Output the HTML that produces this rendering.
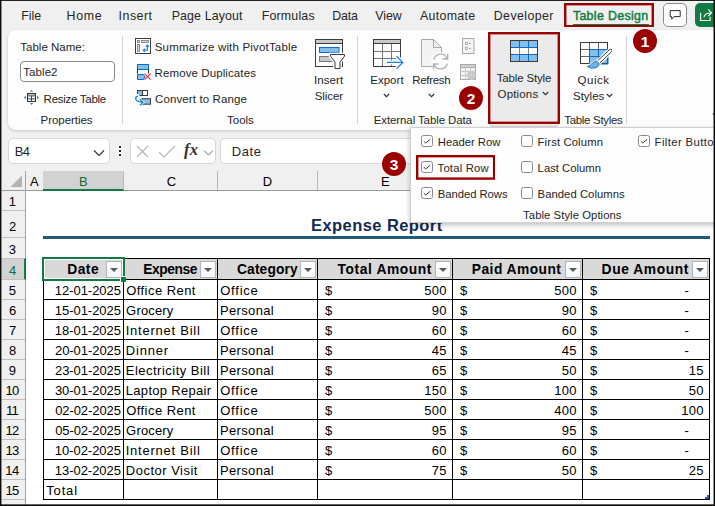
<!DOCTYPE html><html><head><meta charset="utf-8"><title>Expense Report</title><style>
*{box-sizing:border-box;margin:0;padding:0}
html,body{width:715px;height:506px;overflow:hidden;background:#f0f0f0}
body{position:relative;font-family:"Liberation Sans",sans-serif;font-size:11.5px;color:#262626}
.a{position:absolute;white-space:nowrap}
.t{position:absolute;white-space:nowrap;line-height:16px;height:16px}
.b{font-weight:bold}
.hl{position:absolute;background:#000;height:1px}
.vl{position:absolute;background:#000;width:1px}
.cb{position:absolute;width:12px;height:12px;border:1px solid #8a8a8a;border-radius:2.5px;background:#fff}
.dd{position:absolute;width:16px;height:17px;border:1px solid #b4b4b4;background:linear-gradient(#fff,#f4f6fa)}
.dd:after{content:"";position:absolute;left:3.2px;top:5.8px;border-left:4px solid transparent;border-right:4px solid transparent;border-top:4.8px solid #5a5a5a}
.circ{position:absolute;width:24px;height:24px;border-radius:12px;background:#9b0000;color:#fff;font-weight:bold;font-size:15.5px;line-height:26px;text-align:center}
.red{position:absolute;border:2px solid #9b0000}
</style></head><body>
<div class="t" style="left:21.33px;top:8px;font-size:12.4px;letter-spacing:-0.09px">File</div>
<div class="t" style="left:66.53px;top:8px;font-size:12.4px;letter-spacing:0.68px">Home</div>
<div class="t" style="left:118.6px;top:8px;font-size:12.4px;letter-spacing:0.48px">Insert</div>
<div class="t" style="left:171.73px;top:8px;font-size:12.4px;letter-spacing:0.11px">Page Layout</div>
<div class="t" style="left:261.73px;top:8px;font-size:12.4px;letter-spacing:0.18px">Formulas</div>
<div class="t" style="left:332.13px;top:8px;font-size:12.4px;letter-spacing:-0.12px">Data</div>
<div class="t" style="left:375.31px;top:8px;font-size:12.4px;letter-spacing:-0.05px">View</div>
<div class="t" style="left:419.9px;top:8px;font-size:12.4px;letter-spacing:0.32px">Automate</div>
<div class="t" style="left:493.73px;top:8px;font-size:12.4px;letter-spacing:0.41px">Developer</div>
<div class="t" style="left:572.88px;top:8px;font-size:12.4px;letter-spacing:0.33px;color:#107c41;-webkit-text-stroke:.45px #107c41">Table Design</div>
<div class="a" style="left:572.500px;top:24px;width:76px;height:2px;background:#107c41"></div>
<svg class="a" style="left:564px;top:3px" width="90" height="24.4" viewBox="0 0 90 24.4"><rect x="1.2" y="1.2" width="87.6" height="22" fill="none" stroke="#9b0000" stroke-width="2.4"/></svg>
<div class="a" style="left:663px;top:3px;width:24px;height:24px;border:1px solid #8a8a8a;border-radius:5px;background:#fff"></div>
<svg class="a" style="left:668px;top:8px" width="14" height="14" viewBox="0 0 14 14"><path d="M2.200 2.600h10v6h-6.200l-2.300 2.600v-2.600h-1.500z" fill="none" stroke="#2b2b2b" stroke-width="1"/></svg>
<div class="a" style="left:695px;top:3px;width:20px;height:24px;border-radius:5px 0 0 5px;background:#107c41"></div>
<svg class="a" style="left:699px;top:8px" width="14" height="14" viewBox="0 0 14 14"><path d="M1.600 4.800v7.700h9.500v-3.700M5 9.300c.3-3 2.800-4.300 6.800-4.300M9.300 1.400l3.200 3.600-3.200 3.200" fill="none" stroke="#fff" stroke-width="1.100"/></svg>
<div class="a" style="left:8px;top:30px;width:707px;height:100px;background:#fdfdfd;border-radius:8px 0 0 8px;box-shadow:0 1px 3px rgba(0,0,0,.18)"></div>
<div class="a" style="left:122px;top:36px;width:1px;height:88px;background:#d4d4d4"></div>
<div class="a" style="left:357px;top:36px;width:1px;height:88px;background:#d4d4d4"></div>
<div class="a" style="left:626px;top:36px;width:1px;height:88px;background:#d4d4d4"></div>
<div class="t" style="left:20.28px;top:39px;letter-spacing:0.01px">Table Name:</div>
<div class="a" style="left:20px;top:61px;width:95px;height:21px;border:1px solid #8a8a8a;border-radius:4px;background:#fff"></div>
<div class="t" style="left:23.28px;top:64px;letter-spacing:0.07px">Table2</div>
<div class="t" style="left:43.6px;top:91px;letter-spacing:-0.27px">Resize Table</div>
<div class="t" style="left:40.6px;top:112px;letter-spacing:-0.05px">Properties</div>
<svg class="a" style="left:23px;top:89px" width="17" height="17" viewBox="0 0 17 17"><rect x="4.500" y="4.500" width="8" height="8" fill="#fff" stroke="#333"/><rect x="5" y="5" width="7" height="1.500" fill="#c4c4c4"/><path d="M4.500 6.900h8M4.500 9.900h8M8.500 6.900v5.600" stroke="#444" fill="none"/><path d="M8.500 0.900l1.700 1.900h-3.400zM8.500 15.900l1.700-1.900h-3.400zM0.800 8.400l2.100-1.700v3.400zM16.100 8.400l-2.100-1.700v3.400z" fill="#1e88d8"/></svg>
<div class="t" style="left:154.75px;top:39px;letter-spacing:0.18px">Summarize with PivotTable</div>
<div class="t" style="left:154.6px;top:65px;letter-spacing:0.1px">Remove Duplicates</div>
<div class="t" style="left:155.09px;top:91px;letter-spacing:0.11px">Convert to Range</div>
<div class="t" style="left:227.08px;top:112px;letter-spacing:-0.04px">Tools</div>
<svg class="a" style="left:135px;top:38px" width="16" height="16" viewBox="0 0 16 16"><rect x="0.500" y="0.500" width="15" height="15" fill="#fff" stroke="#3b3b3b"/><rect x="2.400" y="2.400" width="2.200" height="2.200" fill="#d8d8d8" stroke="#666" stroke-width=".7"/><rect x="6.400" y="2.400" width="7.200" height="2.200" fill="#d8d8d8" stroke="#666" stroke-width=".7"/><rect x="2.400" y="6.400" width="2.200" height="7.200" fill="#d8d8d8" stroke="#666" stroke-width=".7"/><path d="M8.400 12.200h4v-5M10 10.600l-1.800 1.600 1.800 1.600M10.900 8.800l1.500-1.800 1.500 1.800" fill="none" stroke="#1e88d8" stroke-width="1.200"/></svg>
<svg class="a" style="left:136px;top:63px" width="17" height="18" viewBox="0 0 17 18"><rect x="1.500" y="1.500" width="11" height="5" fill="#83beec" stroke="#0f6cbd"/><path d="M1.500 7v3.500M12.500 7v3.500" stroke="#222" fill="none"/><path d="M1.500 11.500h6l1.500 2.500-1.500 2.500h-6z" fill="#83beec" stroke="#0f6cbd"/><path d="M8.600 10.600l6 6M14.600 10.600l-6 6" stroke="#e8424a" stroke-width="1.300" fill="none"/></svg>
<svg class="a" style="left:134px;top:89px" width="18" height="18" viewBox="0 0 18 18"><rect x="3.500" y="1.500" width="10" height="5" fill="#fff" stroke="#3b3b3b"/><rect x="4" y="2" width="4.500" height="4" fill="#83beec"/><path d="M8.500 1.500v5" stroke="#3b3b3b"/><rect x="8" y="9.700" width="8.500" height="5.500" fill="#83beec" stroke="#3b3b3b"/><path d="M6.500 9.500l4.500 3.700-4.500 3.700z" fill="#fdfdfd"/><path d="M2.500 5.500l2.500 2" stroke="#fdfdfd" stroke-width="2.500"/><path d="M3.800 6.800C0.500 8.500 0.500 12.800 8.500 13.200M5.800 10.300L9 13.200L5.800 16.400" fill="none" stroke="#1e88d8" stroke-width="1.300"/></svg>
<div class="t" style="left:314.12px;top:72px;letter-spacing:0.04px">Insert</div>
<div class="t" style="left:314.75px;top:88px;letter-spacing:-0.09px">Slicer</div>
<svg class="a" style="left:314px;top:38px" width="32" height="32" viewBox="0 0 32 32"><rect x="1.500" y="1.500" width="27" height="27" fill="#fdfdfd" stroke="#3b3b3b"/><rect x="1.500" y="1.500" width="27" height="4" fill="#c8c8c8" stroke="#3b3b3b"/><rect x="5.500" y="9.500" width="19.500" height="5" fill="#83beec" stroke="#0f6cbd"/><rect x="5.500" y="18.500" width="13" height="5" fill="#c8c8c8" stroke="#777"/><path d="M16.500 16.500h14v1.700l-4.500 5.800v6.500h-5v-6.500l-4.500-5.800z" fill="#fdfdfd" stroke="#fdfdfd" stroke-width="3.500"/><path d="M16.500 16.500h14v1.700l-4.500 5.800v6.500h-5v-6.500l-4.500-5.800z" fill="#fdfdfd" stroke="#3b3b3b"/></svg>
<div class="t" style="left:370.2px;top:72px;letter-spacing:0.03px">Export</div>
<svg class="a" style="left:372px;top:38px" width="32" height="32" viewBox="0 0 32 32"><rect x="1.500" y="1.500" width="27" height="27" fill="#fdfdfd" stroke="#3b3b3b"/><path d="M10.500 5.500v23M19.500 5.500v23M1.500 13.500h27M1.500 20.500h27" stroke="#777" fill="none"/><rect x="1.500" y="1.500" width="27" height="4" fill="#c8c8c8" stroke="#3b3b3b"/><rect x="1.500" y="1.500" width="27" height="27" fill="none" stroke="#3b3b3b"/><path d="M15 24.400h15.500M24.500 18.200l6.300 6.200-6.300 6.200" fill="none" stroke="#fdfdfd" stroke-width="4"/><path d="M15 24.400h15.500M24.500 18.200l6.300 6.200-6.300 6.200" fill="none" stroke="#1e88d8" stroke-width="1.300"/></svg>
<svg class="a" style="left:382.7px;top:93.2px" width="7" height="5" viewBox="0 0 7 5"><path d="M0.800 1l2.700 2.700 2.700-2.700" fill="none" stroke="#333" stroke-width="1.150"/></svg>
<div class="t" style="left:412.2px;top:72px;letter-spacing:-0.31px">Refresh</div>
<svg class="a" style="left:419px;top:38px" width="32" height="33" viewBox="0 0 32 33"><path d="M2.500 1.500h12l8 8v19h-20z" fill="#f3f3f3" stroke="#a8a8a8"/><path d="M14.500 1.500v8h8" fill="none" stroke="#a8a8a8"/><circle cx="21.600" cy="23.500" r="9.500" fill="#fdfdfd"/><path d="M14.900 21.500A7 7 0 0 1 28.200 20.500M28.700 16v5h-5M28.300 25.500A7 7 0 0 1 15 26.500M14.500 31v-5h5" fill="none" stroke="#b0b0b0" stroke-width="1.300"/></svg>
<svg class="a" style="left:428.2px;top:93.2px" width="7" height="5" viewBox="0 0 7 5"><path d="M0.800 1l2.700 2.700 2.700-2.700" fill="none" stroke="#333" stroke-width="1.150"/></svg>
<svg class="a" style="left:461px;top:37px" width="14" height="18" viewBox="0 0 14 18"><rect x="1.500" y="1.500" width="11.500" height="15" fill="#f3f3f3" stroke="#a8a8a8"/><rect x="4.500" y="5.500" width="2" height="2" fill="none" stroke="#a8a8a8" stroke-width=".8"/><rect x="4.500" y="10.500" width="2" height="2" fill="none" stroke="#a8a8a8" stroke-width=".8"/><path d="M8 6.500h2M8 11.500h2" stroke="#a8a8a8" fill="none"/></svg>
<svg class="a" style="left:459px;top:63px" width="19" height="18" viewBox="0 0 19 18"><rect x="1.500" y="1.500" width="15" height="15" fill="#f6f6f6" stroke="#a8a8a8"/><rect x="1.500" y="1.500" width="15" height="3" fill="#d0d0d0" stroke="#a8a8a8"/><path d="M1.500 8.500h15M1.500 12.500h8M6.500 4.500v12M11.500 4.500v4" stroke="#c4c4c4" fill="none"/><circle cx="12.600" cy="12.100" r="4.700" fill="#c2c2c2"/><path d="M8.200 12.100h8.800M12.600 7.700v8.800" stroke="#dcdcdc" stroke-width=".5" fill="none"/><ellipse cx="12.600" cy="12.100" rx="2.200" ry="4.300" fill="none" stroke="#dcdcdc" stroke-width=".5"/></svg>
<div class="t" style="left:373.8px;top:112px;letter-spacing:-0.11px">External Table Data</div>
<div class="a" style="left:489px;top:33px;width:70px;height:94px;background:#ebebeb;border-radius:0 0 4px 4px;border-bottom:1px solid #d8d8d8"></div>
<svg class="a" style="left:488px;top:32px" width="72" height="92" viewBox="0 0 72 92"><rect x="1.2" y="1.2" width="69.6" height="89.6" fill="none" stroke="#9b0000" stroke-width="2.4"/></svg>
<svg class="a" style="left:510px;top:40px" width="28" height="22" viewBox="0 0 28 22"><rect x="0.500" y="0.500" width="27" height="21" fill="#83beec" stroke="#3b3b3b"/><rect x="1" y="8" width="26" height="6" fill="#fafafa"/><path d="M9.500 1v20M18.500 1v20M1 7.500h26M1 14.500h26" stroke="#0f6cbd" fill="none"/><path d="M9.500 8v6M18.500 8v6" stroke="#808080" fill="none"/><rect x="0.500" y="0.500" width="27" height="21" fill="none" stroke="#3b3b3b"/></svg>
<div class="t" style="left:496.68px;top:70px;letter-spacing:-0.16px">Table Style</div>
<div class="t" style="left:497.53px;top:86px;letter-spacing:0.17px">Options</div>
<svg class="a" style="left:542.3px;top:91.3px" width="7" height="5" viewBox="0 0 7 5"><path d="M0.800 1l2.700 2.700 2.700-2.700" fill="none" stroke="#333" stroke-width="1.150"/></svg>
<svg class="a" style="left:579px;top:41px" width="33" height="30" viewBox="0 0 33 30"><rect x="1.500" y="1.500" width="27" height="21" fill="#fdfdfd" stroke="#3b3b3b"/><path d="M10.500 1.500v21M19.500 1.500v21M1.500 8.500h27M1.500 15.500h27" stroke="#666" fill="none"/><rect x="10.500" y="8.500" width="18" height="14" fill="#83beec" stroke="#0f6cbd"/><path d="M19.500 8.500v14M10.500 15.500h18" stroke="#0f6cbd" fill="none"/><rect x="1.500" y="1.500" width="27" height="21" fill="none" stroke="#3b3b3b"/><path d="M10.500 8.500h18.500v14.500h-18.500z" fill="none" stroke="#0f6cbd"/><path d="M31 8.300l-13.500 12.500 2.200 2.400 13-12.600c1-1.500-.5-3-1.700-2.300z" fill="#fdfdfd" stroke="#fdfdfd" stroke-width="3"/><path d="M31 8.300l-13.500 12.500 2.200 2.400 13-12.600c1-1.500-.5-3-1.700-2.300z" fill="#fdfdfd" stroke="#444"/><path d="M18 20.300c-4.500-1-4.500 4-9.600 5.200 4 2.800 11.500 2 11.800-2.700z" fill="#5ea6e8" stroke="#fdfdfd" stroke-width="2.500"/><path d="M18 20.300c-4.500-1-4.500 4-9.600 5.200 4 2.800 11.500 2 11.800-2.700z" fill="#6cb0ea" stroke="#0f6cbd" stroke-width=".9"/></svg>
<div class="t" style="left:577.53px;top:72px;letter-spacing:0.53px">Quick</div>
<div class="t" style="left:572.95px;top:88px;letter-spacing:0.02px">Styles</div>
<svg class="a" style="left:606.4px;top:93.2px" width="7" height="5" viewBox="0 0 7 5"><path d="M0.800 1l2.700 2.700 2.700-2.700" fill="none" stroke="#333" stroke-width="1.150"/></svg>
<div class="t" style="left:564.28px;top:112px;letter-spacing:-0.32px">Table Styles</div>
<svg class="a" style="left:711.500px;top:112px" width="10" height="8" viewBox="0 0 10 8"><path d="M1 1.500l4 4 4-4" fill="none" stroke="#333" stroke-width="1.200"/></svg>
<div class="circ" style="left:633px;top:29px">1</div>
<div class="circ" style="left:459px;top:86px">2</div>
<div class="a" style="left:8px;top:138px;width:102px;height:26px;background:#fff;border:1px solid #d6d6d6;border-radius:5px"></div>
<div class="t" style="left:14.72px;top:143.5px;font-size:13px;letter-spacing:-0.61px">B4</div>
<svg class="a" style="left:93px;top:148.500px" width="12" height="8" viewBox="0 0 12 8"><path d="M1 1.500l5 5 5-5" fill="none" stroke="#333" stroke-width="1.200"/></svg>
<div class="a" style="left:119px;top:146px;width:2px;height:2px;background:#222;box-shadow:0 0 0 1px rgba(255,255,255,.75)"></div>
<div class="a" style="left:119px;top:150px;width:2px;height:2px;background:#222;box-shadow:0 0 0 1px rgba(255,255,255,.75)"></div>
<div class="a" style="left:119px;top:154px;width:2px;height:2px;background:#222;box-shadow:0 0 0 1px rgba(255,255,255,.75)"></div>
<div class="a" style="left:130px;top:138px;width:86px;height:26px;background:#fff;border:1px solid #d6d6d6;border-radius:5px"></div>
<svg class="a" style="left:136px;top:145px" width="13" height="13" viewBox="0 0 13 13"><path d="M1 1l11 11M12 1l-11 11" stroke="#b8b8b8" stroke-width="1.200" fill="none"/></svg>
<svg class="a" style="left:158px;top:145px" width="18" height="13" viewBox="0 0 18 13"><path d="M1 7l5 5 11-11" stroke="#b8b8b8" stroke-width="1.200" fill="none"/></svg>
<div class="a" style="left:184px;top:140px;font-family:'Liberation Serif',serif;font-style:italic;font-weight:bold;font-size:16.500px;line-height:20px;color:#333;letter-spacing:.3px">fx</div>
<svg class="a" style="left:203px;top:148.500px" width="11" height="8" viewBox="0 0 11 8"><path d="M1 1.500l4.500 4.500 4.500-4.500" fill="none" stroke="#6a6a6a" stroke-width="1"/></svg>
<div class="a" style="left:220px;top:138px;width:496px;height:26px;background:#fff;border:1px solid #d6d6d6;border-radius:5px 0 0 5px"></div>
<div class="t" style="left:231.72px;top:143.5px;font-size:13px;letter-spacing:0.58px">Date</div>
<div class="a" style="left:26px;top:191px;width:689px;height:315px;background:#fff"></div>
<div class="a" style="left:1px;top:171px;width:714px;height:19px;background:#f0f0f0"></div>
<div class="a" style="left:1px;top:190px;width:714px;height:1px;background:#9c9c9c"></div>
<div class="a" style="left:43px;top:171px;width:81px;height:20px;background:#d2d2d2;border-bottom:2px solid #107c41"></div>
<div class="a" style="left:123px;top:171px;width:1px;height:19px;background:#b8b8b8"></div>
<div class="a" style="left:217px;top:171px;width:1px;height:19px;background:#b8b8b8"></div>
<div class="a" style="left:317px;top:171px;width:1px;height:19px;background:#b8b8b8"></div>
<div class="a" style="left:452px;top:171px;width:1px;height:19px;background:#b8b8b8"></div>
<div class="a" style="left:582px;top:171px;width:1px;height:19px;background:#b8b8b8"></div>
<div class="t" style="left:30.11px;top:173.5px;font-size:13px;color:#000">A</div>
<div class="t" style="left:166.7px;top:173.5px;font-size:13px;color:#000">C</div>
<div class="t" style="left:262.86px;top:173.5px;font-size:13px;color:#000">D</div>
<div class="t" style="left:380.89px;top:173.5px;font-size:13px;color:#000">E</div>
<div class="t" style="left:78.96px;top:173.5px;font-size:13px;color:#0e6b38">B</div>
<svg class="a" style="left:10px;top:175px" width="13" height="13" viewBox="0 0 13 13"><path d="M12 0.500v11.500h-11.500z" fill="#b4b4b4"/></svg>
<div class="a" style="left:1px;top:191px;width:24px;height:315px;background:#f0f0f0"></div>
<div class="a" style="left:1px;top:258px;width:25px;height:22px;background:#d2d2d2"></div>
<div class="a" style="left:25px;top:171px;width:1px;height:335px;background:#a4a4a4"></div>
<div class="a" style="left:24px;top:258px;width:2px;height:22px;background:#107c41"></div>
<div class="t" style="left:8.73px;top:193.5px;font-size:13px;color:#000">1</div>
<div class="a" style="left:1px;top:210px;width:24px;height:1px;background:#c0c0c0"></div>
<div class="t" style="left:8.88px;top:218.5px;font-size:13px;color:#000">2</div>
<div class="a" style="left:1px;top:237px;width:24px;height:1px;background:#c0c0c0"></div>
<div class="t" style="left:8.83px;top:241.5px;font-size:13px;color:#000">3</div>
<div class="a" style="left:1px;top:258px;width:24px;height:1px;background:#c0c0c0"></div>
<div class="t" style="left:8.96px;top:262.5px;font-size:13px;color:#0e6b38">4</div>
<div class="a" style="left:1px;top:279px;width:24px;height:1px;background:#c0c0c0"></div>
<div class="t" style="left:8.81px;top:282.5px;font-size:13px;color:#000">5</div>
<div class="a" style="left:1px;top:299px;width:24px;height:1px;background:#c0c0c0"></div>
<div class="t" style="left:8.89px;top:302.5px;font-size:13px;color:#000">6</div>
<div class="a" style="left:1px;top:319px;width:24px;height:1px;background:#c0c0c0"></div>
<div class="t" style="left:8.88px;top:322.5px;font-size:13px;color:#000">7</div>
<div class="a" style="left:1px;top:339px;width:24px;height:1px;background:#c0c0c0"></div>
<div class="t" style="left:8.89px;top:342.5px;font-size:13px;color:#000">8</div>
<div class="a" style="left:1px;top:359px;width:24px;height:1px;background:#c0c0c0"></div>
<div class="t" style="left:8.86px;top:362.5px;font-size:13px;color:#000">9</div>
<div class="a" style="left:1px;top:379px;width:24px;height:1px;background:#c0c0c0"></div>
<div class="t" style="left:5.38px;top:382.5px;font-size:13px;letter-spacing:-0.6px;color:#000">10</div>
<div class="a" style="left:1px;top:399px;width:24px;height:1px;background:#c0c0c0"></div>
<div class="t" style="left:5.91px;top:402.5px;font-size:13px;letter-spacing:-0.6px;color:#000">11</div>
<div class="a" style="left:1px;top:419px;width:24px;height:1px;background:#c0c0c0"></div>
<div class="t" style="left:5.41px;top:422.5px;font-size:13px;letter-spacing:-0.6px;color:#000">12</div>
<div class="a" style="left:1px;top:439px;width:24px;height:1px;background:#c0c0c0"></div>
<div class="t" style="left:5.41px;top:442.5px;font-size:13px;letter-spacing:-0.6px;color:#000">13</div>
<div class="a" style="left:1px;top:459px;width:24px;height:1px;background:#c0c0c0"></div>
<div class="t" style="left:5.31px;top:462.5px;font-size:13px;letter-spacing:-0.6px;color:#000">14</div>
<div class="a" style="left:1px;top:479px;width:24px;height:1px;background:#c0c0c0"></div>
<div class="t" style="left:5.41px;top:482.5px;font-size:13px;letter-spacing:-0.6px;color:#000">15</div>
<div class="a" style="left:1px;top:499px;width:24px;height:1px;background:#c0c0c0"></div>
<div class="t b" style="left:311px;top:217px;font-size:16.5px;letter-spacing:0.43px;color:#152a52">Expense Report</div>
<div class="a" style="left:43px;top:236px;width:667px;height:3px;background:#1f5c7c"></div>
<div class="a" style="left:43px;top:258px;width:667px;height:21px;background:#d9d9d9"></div>
<div class="hl" style="left:43px;top:258px;width:667px"></div>
<div class="hl" style="left:43px;top:279px;width:667px"></div>
<div class="hl" style="left:43px;top:299px;width:667px"></div>
<div class="hl" style="left:43px;top:319px;width:667px"></div>
<div class="hl" style="left:43px;top:339px;width:667px"></div>
<div class="hl" style="left:43px;top:359px;width:667px"></div>
<div class="hl" style="left:43px;top:379px;width:667px"></div>
<div class="hl" style="left:43px;top:399px;width:667px"></div>
<div class="hl" style="left:43px;top:419px;width:667px"></div>
<div class="hl" style="left:43px;top:439px;width:667px"></div>
<div class="hl" style="left:43px;top:459px;width:667px"></div>
<div class="hl" style="left:43px;top:479px;width:667px"></div>
<div class="hl" style="left:43px;top:499px;width:667px"></div>
<div class="vl" style="left:43px;top:258px;height:242px"></div>
<div class="vl" style="left:123px;top:258px;height:242px"></div>
<div class="vl" style="left:217px;top:258px;height:242px"></div>
<div class="vl" style="left:317px;top:258px;height:242px"></div>
<div class="vl" style="left:452px;top:258px;height:242px"></div>
<div class="vl" style="left:582px;top:258px;height:242px"></div>
<div class="vl" style="left:709px;top:258px;height:242px"></div>
<div class="t b" style="left:67.2px;top:261.5px;font-size:13.8px;letter-spacing:0.52px;color:#000">Date</div>
<div class="dd" style="left:106px;top:261px"></div>
<div class="t b" style="left:143.2px;top:261.5px;font-size:13.8px;letter-spacing:-0.43px;color:#000">Expense</div>
<div class="dd" style="left:200px;top:261px"></div>
<div class="t b" style="left:237px;top:261.5px;font-size:13.8px;letter-spacing:0.12px;color:#000">Category</div>
<div class="dd" style="left:300px;top:261px"></div>
<div class="t b" style="left:337.6px;top:261.5px;font-size:13.8px;letter-spacing:0.59px;color:#000">Total Amount</div>
<div class="dd" style="left:435px;top:261px"></div>
<div class="t b" style="left:471.8px;top:261.5px;font-size:13.8px;letter-spacing:0.46px;color:#000">Paid Amount</div>
<div class="dd" style="left:565px;top:261px"></div>
<div class="t b" style="left:601.6px;top:261.5px;font-size:13.8px;letter-spacing:0.58px;color:#000">Due Amount</div>
<div class="dd" style="left:692px;top:261px"></div>
<div class="t" style="left:54.75px;top:282.5px;font-size:13px;letter-spacing:-0.03px;color:#000">12-01-2025</div>
<div class="t" style="left:126.16px;top:282.5px;font-size:13px;letter-spacing:0.45px;color:#000">Office Rent</div>
<div class="t" style="left:220.26px;top:282.5px;font-size:13px;letter-spacing:0.76px;color:#000">Office</div>
<div class="t" style="left:325.11px;top:282.5px;font-size:13px;color:#000">$</div>
<div class="t" style="left:424.37px;top:282.5px;font-size:13px;letter-spacing:0.2px;color:#000">500</div>
<div class="t" style="left:460.11px;top:282.5px;font-size:13px;color:#000">$</div>
<div class="t" style="left:554.37px;top:282.5px;font-size:13px;letter-spacing:0.2px;color:#000">500</div>
<div class="t" style="left:590.11px;top:282.5px;font-size:13px;color:#000">$</div>
<div class="t" style="left:684.55px;top:282.5px;font-size:13px;color:#000">-</div>
<div class="t" style="left:54.75px;top:302.5px;font-size:13px;letter-spacing:-0.03px;color:#000">15-01-2025</div>
<div class="t" style="left:126.12px;top:302.5px;font-size:13px;letter-spacing:0.17px;color:#000">Grocery</div>
<div class="t" style="left:219.92px;top:302.5px;font-size:13px;letter-spacing:0.36px;color:#000">Personal</div>
<div class="t" style="left:325.11px;top:302.5px;font-size:13px;color:#000">$</div>
<div class="t" style="left:431.8px;top:302.5px;font-size:13px;letter-spacing:0.2px;color:#000">90</div>
<div class="t" style="left:460.11px;top:302.5px;font-size:13px;color:#000">$</div>
<div class="t" style="left:561.8px;top:302.5px;font-size:13px;letter-spacing:0.2px;color:#000">90</div>
<div class="t" style="left:590.11px;top:302.5px;font-size:13px;color:#000">$</div>
<div class="t" style="left:684.55px;top:302.5px;font-size:13px;color:#000">-</div>
<div class="t" style="left:54.75px;top:322.5px;font-size:13px;letter-spacing:-0.03px;color:#000">18-01-2025</div>
<div class="t" style="left:125.64px;top:322.5px;font-size:13px;letter-spacing:0.77px;color:#000">Internet Bill</div>
<div class="t" style="left:220.26px;top:322.5px;font-size:13px;letter-spacing:0.76px;color:#000">Office</div>
<div class="t" style="left:325.11px;top:322.5px;font-size:13px;color:#000">$</div>
<div class="t" style="left:431.8px;top:322.5px;font-size:13px;letter-spacing:0.2px;color:#000">60</div>
<div class="t" style="left:460.11px;top:322.5px;font-size:13px;color:#000">$</div>
<div class="t" style="left:561.8px;top:322.5px;font-size:13px;letter-spacing:0.2px;color:#000">60</div>
<div class="t" style="left:590.11px;top:322.5px;font-size:13px;color:#000">$</div>
<div class="t" style="left:684.55px;top:322.5px;font-size:13px;color:#000">-</div>
<div class="t" style="left:55.03px;top:342.5px;font-size:13px;letter-spacing:-0.06px;color:#000">20-01-2025</div>
<div class="t" style="left:125.82px;top:342.5px;font-size:13px;letter-spacing:0.77px;color:#000">Dinner</div>
<div class="t" style="left:219.92px;top:342.5px;font-size:13px;letter-spacing:0.36px;color:#000">Personal</div>
<div class="t" style="left:325.11px;top:342.5px;font-size:13px;color:#000">$</div>
<div class="t" style="left:431.86px;top:342.5px;font-size:13px;letter-spacing:0.2px;color:#000">45</div>
<div class="t" style="left:460.11px;top:342.5px;font-size:13px;color:#000">$</div>
<div class="t" style="left:561.86px;top:342.5px;font-size:13px;letter-spacing:0.2px;color:#000">45</div>
<div class="t" style="left:590.11px;top:342.5px;font-size:13px;color:#000">$</div>
<div class="t" style="left:684.55px;top:342.5px;font-size:13px;color:#000">-</div>
<div class="t" style="left:55.03px;top:362.5px;font-size:13px;letter-spacing:-0.06px;color:#000">23-01-2025</div>
<div class="t" style="left:125.82px;top:362.5px;font-size:13px;letter-spacing:0.48px;color:#000">Electricity Bill</div>
<div class="t" style="left:219.92px;top:362.5px;font-size:13px;letter-spacing:0.36px;color:#000">Personal</div>
<div class="t" style="left:325.11px;top:362.5px;font-size:13px;color:#000">$</div>
<div class="t" style="left:431.86px;top:362.5px;font-size:13px;letter-spacing:0.2px;color:#000">65</div>
<div class="t" style="left:460.11px;top:362.5px;font-size:13px;color:#000">$</div>
<div class="t" style="left:561.8px;top:362.5px;font-size:13px;letter-spacing:0.2px;color:#000">50</div>
<div class="t" style="left:590.11px;top:362.5px;font-size:13px;color:#000">$</div>
<div class="t" style="left:688.86px;top:362.5px;font-size:13px;letter-spacing:0.2px;color:#000">15</div>
<div class="t" style="left:54.95px;top:382.5px;font-size:13px;letter-spacing:-0.05px;color:#000">30-01-2025</div>
<div class="t" style="left:125.82px;top:382.5px;font-size:13px;letter-spacing:0.3px;color:#000">Laptop Repair</div>
<div class="t" style="left:220.26px;top:382.5px;font-size:13px;letter-spacing:0.76px;color:#000">Office</div>
<div class="t" style="left:325.11px;top:382.5px;font-size:13px;color:#000">$</div>
<div class="t" style="left:424.37px;top:382.5px;font-size:13px;letter-spacing:0.2px;color:#000">150</div>
<div class="t" style="left:460.11px;top:382.5px;font-size:13px;color:#000">$</div>
<div class="t" style="left:554.37px;top:382.5px;font-size:13px;letter-spacing:0.2px;color:#000">100</div>
<div class="t" style="left:590.11px;top:382.5px;font-size:13px;color:#000">$</div>
<div class="t" style="left:688.8px;top:382.5px;font-size:13px;letter-spacing:0.2px;color:#000">50</div>
<div class="t" style="left:55.16px;top:402.5px;font-size:13px;letter-spacing:-0.08px;color:#000">02-02-2025</div>
<div class="t" style="left:126.16px;top:402.5px;font-size:13px;letter-spacing:0.45px;color:#000">Office Rent</div>
<div class="t" style="left:220.26px;top:402.5px;font-size:13px;letter-spacing:0.76px;color:#000">Office</div>
<div class="t" style="left:325.11px;top:402.5px;font-size:13px;color:#000">$</div>
<div class="t" style="left:424.37px;top:402.5px;font-size:13px;letter-spacing:0.2px;color:#000">500</div>
<div class="t" style="left:460.11px;top:402.5px;font-size:13px;color:#000">$</div>
<div class="t" style="left:554.37px;top:402.5px;font-size:13px;letter-spacing:0.2px;color:#000">400</div>
<div class="t" style="left:590.11px;top:402.5px;font-size:13px;color:#000">$</div>
<div class="t" style="left:681.37px;top:402.5px;font-size:13px;letter-spacing:0.2px;color:#000">100</div>
<div class="t" style="left:55.16px;top:422.5px;font-size:13px;letter-spacing:-0.08px;color:#000">05-02-2025</div>
<div class="t" style="left:126.12px;top:422.5px;font-size:13px;letter-spacing:0.17px;color:#000">Grocery</div>
<div class="t" style="left:219.92px;top:422.5px;font-size:13px;letter-spacing:0.36px;color:#000">Personal</div>
<div class="t" style="left:325.11px;top:422.5px;font-size:13px;color:#000">$</div>
<div class="t" style="left:431.86px;top:422.5px;font-size:13px;letter-spacing:0.2px;color:#000">95</div>
<div class="t" style="left:460.11px;top:422.5px;font-size:13px;color:#000">$</div>
<div class="t" style="left:561.86px;top:422.5px;font-size:13px;letter-spacing:0.2px;color:#000">95</div>
<div class="t" style="left:590.11px;top:422.5px;font-size:13px;color:#000">$</div>
<div class="t" style="left:684.55px;top:422.5px;font-size:13px;color:#000">-</div>
<div class="t" style="left:54.75px;top:442.5px;font-size:13px;letter-spacing:-0.03px;color:#000">10-02-2025</div>
<div class="t" style="left:125.64px;top:442.5px;font-size:13px;letter-spacing:0.77px;color:#000">Internet Bill</div>
<div class="t" style="left:220.26px;top:442.5px;font-size:13px;letter-spacing:0.76px;color:#000">Office</div>
<div class="t" style="left:325.11px;top:442.5px;font-size:13px;color:#000">$</div>
<div class="t" style="left:431.8px;top:442.5px;font-size:13px;letter-spacing:0.2px;color:#000">60</div>
<div class="t" style="left:460.11px;top:442.5px;font-size:13px;color:#000">$</div>
<div class="t" style="left:561.8px;top:442.5px;font-size:13px;letter-spacing:0.2px;color:#000">60</div>
<div class="t" style="left:590.11px;top:442.5px;font-size:13px;color:#000">$</div>
<div class="t" style="left:684.55px;top:442.5px;font-size:13px;color:#000">-</div>
<div class="t" style="left:54.75px;top:462.5px;font-size:13px;letter-spacing:-0.03px;color:#000">13-02-2025</div>
<div class="t" style="left:125.82px;top:462.5px;font-size:13px;letter-spacing:0.49px;color:#000">Doctor Visit</div>
<div class="t" style="left:219.92px;top:462.5px;font-size:13px;letter-spacing:0.36px;color:#000">Personal</div>
<div class="t" style="left:325.11px;top:462.5px;font-size:13px;color:#000">$</div>
<div class="t" style="left:431.86px;top:462.5px;font-size:13px;letter-spacing:0.2px;color:#000">75</div>
<div class="t" style="left:460.11px;top:462.5px;font-size:13px;color:#000">$</div>
<div class="t" style="left:561.8px;top:462.5px;font-size:13px;letter-spacing:0.2px;color:#000">50</div>
<div class="t" style="left:590.11px;top:462.5px;font-size:13px;color:#000">$</div>
<div class="t" style="left:688.86px;top:462.5px;font-size:13px;letter-spacing:0.2px;color:#000">25</div>
<div class="t" style="left:46.26px;top:482.5px;font-size:13px;letter-spacing:0.84px;color:#000">Total</div>
<div class="a" style="left:42px;top:257px;width:83px;height:24px;border:2px solid #107c41;box-shadow:inset 0 0 0 1px #fff"></div>
<div class="a" style="left:120px;top:276px;width:6px;height:6px;background:#107c41;border-left:1px solid #fff;border-top:1px solid #fff"></div>
<div class="a" style="left:705px;top:495px;width:4px;height:4px;border-right:2px solid #3553a8;border-bottom:2px solid #3553a8"></div>
<div class="a" style="left:410px;top:127px;width:310px;height:96px;background:#fdfdfd;border:1px solid #cfcfcf;box-shadow:0 2px 5px rgba(0,0,0,.25)"></div>
<div class="cb" style="left:421px;top:135px"><svg width="10" height="10" viewBox="0 0 10 10" style="position:absolute;left:0;top:0"><path d="M1.800 5.200l1.900 1.800 4.500-3.700" fill="none" stroke="#3a3a3a" stroke-width="1"/></svg></div>
<div class="t" style="left:437.8px;top:134px;font-size:11.3px;letter-spacing:-0.02px">Header Row</div>
<div class="cb" style="left:421px;top:161px"><svg width="10" height="10" viewBox="0 0 10 10" style="position:absolute;left:0;top:0"><path d="M1.800 5.200l1.900 1.800 4.500-3.700" fill="none" stroke="#3a3a3a" stroke-width="1"/></svg></div>
<div class="t" style="left:437.58px;top:160px;font-size:11.3px;letter-spacing:0.18px">Total Row</div>
<div class="cb" style="left:421px;top:187px"><svg width="10" height="10" viewBox="0 0 10 10" style="position:absolute;left:0;top:0"><path d="M1.800 5.200l1.900 1.800 4.500-3.700" fill="none" stroke="#3a3a3a" stroke-width="1"/></svg></div>
<div class="t" style="left:437.8px;top:186px;font-size:11.3px;letter-spacing:-0.06px">Banded Rows</div>
<div class="cb" style="left:521px;top:135px"></div>
<div class="t" style="left:537.6px;top:134px;font-size:11.3px;letter-spacing:0.12px">First Column</div>
<div class="cb" style="left:521px;top:161px"></div>
<div class="t" style="left:537.6px;top:160px;font-size:11.3px">Last Column</div>
<div class="cb" style="left:521px;top:187px"></div>
<div class="t" style="left:537.6px;top:186px;font-size:11.3px;letter-spacing:0.03px">Banded Columns</div>
<div class="cb" style="left:638px;top:135px"><svg width="10" height="10" viewBox="0 0 10 10" style="position:absolute;left:0;top:0"><path d="M1.800 5.200l1.900 1.800 4.500-3.700" fill="none" stroke="#3a3a3a" stroke-width="1"/></svg></div>
<div class="t" style="left:654.6px;top:134px;font-size:11.3px;letter-spacing:0.39px">Filter Button</div>
<div class="t" style="left:523.08px;top:207px;font-size:11.3px;letter-spacing:0.06px">Table Style Options</div>
<svg class="a" style="left:415.8px;top:155px" width="79.3" height="24.8" viewBox="0 0 79.3 24.8"><rect x="1.2" y="1.2" width="76.9" height="22.4" fill="none" stroke="#9b0000" stroke-width="2.4"/></svg>
<div class="circ" style="left:382px;top:152px">3</div>
<div class="a" style="left:0;top:0;width:715px;height:1px;background:#222"></div>
<div class="a" style="left:0;top:0;width:1px;height:506px;background:#0a0a0a"></div>
<div class="a" style="left:1px;top:0;width:1px;height:506px;background:rgba(0,0,0,.4)"></div>
<div class="a" style="left:713px;top:0;width:1px;height:506px;background:rgba(0,0,0,.45)"></div>
<div class="a" style="left:714px;top:0;width:1px;height:506px;background:#0a0a0a"></div>
<div class="a" style="left:0;top:504px;width:715px;height:1px;background:rgba(0,0,0,.6)"></div>
<div class="a" style="left:0;top:505px;width:715px;height:1px;background:#0a0a0a"></div>
</body></html>
